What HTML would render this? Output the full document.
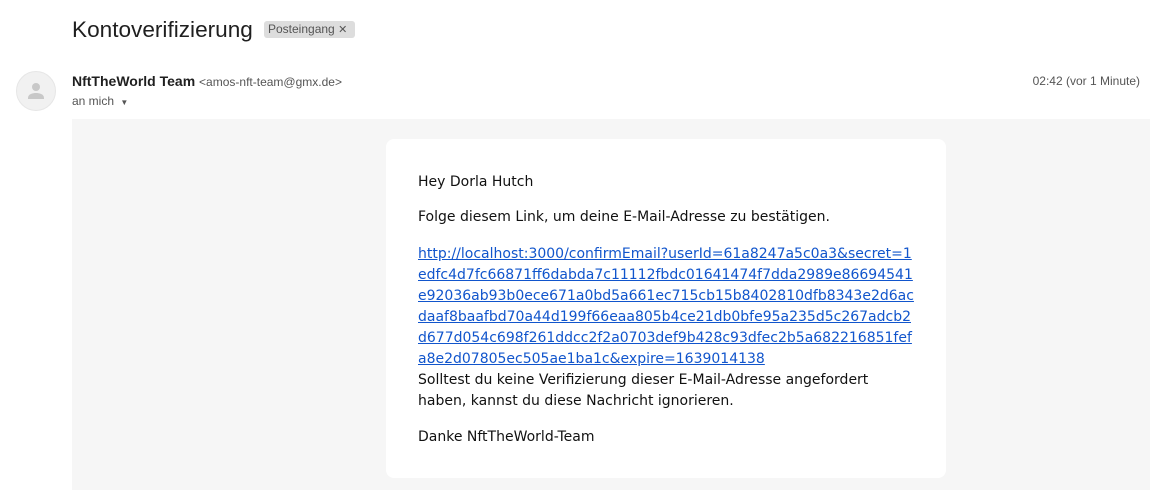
<!DOCTYPE html>
<html><head><meta charset="utf-8"><style>
body{margin:0;width:1150px;height:490px;background:#fff;position:relative;overflow:hidden;font-family:"Liberation Sans",Arial,sans-serif;}
.a{position:absolute;white-space:nowrap;}
.card{position:absolute;left:386px;top:139px;width:560px;height:339px;background:#fff;border-radius:8px;}
.t{position:absolute;left:32px;font-family:"DejaVu Sans",sans-serif;font-size:14px;color:#111;white-space:nowrap;line-height:21px;}
a{color:#1155cc;text-decoration:underline;}
</style></head><body>
<div class="a" style="left:72px;top:17px;font-size:22.6px;color:#1f1f1f;">Kontoverifizierung</div>
<div class="a" style="left:264px;top:21px;height:17px;width:91px;background:#dddddd;border-radius:3px;font-size:12px;color:#555;line-height:17px;padding-left:4px;box-sizing:border-box;">Posteingang <span style="font-size:11px">✕</span></div>
<div class="a" style="left:16px;top:71px;width:40px;height:40px;border-radius:50%;background:#f1f1f1;border:1px solid #e6e6e6;box-sizing:border-box;">
<svg width="40" height="40" viewBox="0 0 40 40" style="position:absolute;left:-1px;top:-1px"><circle cx="20" cy="16" r="4" fill="#c8c8c8"/><path d="M12 27c0-4 5-5 8-5s8 1 8 5v1H12z" fill="#c8c8c8"/></svg></div>
<div class="a" style="left:72px;top:73px;font-size:14px;color:#1f1f1f;"><b>NftTheWorld Team</b> <span style="font-size:12px;color:#555">&lt;amos-nft-team@gmx.de&gt;</span></div>
<div class="a" style="left:72px;top:94px;font-size:12px;color:#555;">an mich <span style="font-size:8px;margin-left:3px">▼</span></div>
<div class="a" style="right:10px;top:74px;font-size:12px;color:#555;">02:42 (vor 1 Minute)</div>
<div class="a" style="left:72px;top:119px;width:1078px;height:371px;background:#f6f6f6;"></div>
<div class="card">
<div class="t" style="top:33px">Hey Dorla Hutch</div>
<div class="t" style="top:68px">Folge diesem Link, um deine E-Mail-Adresse zu bestätigen.</div>
<div class="t" style="top:105px"><a>http://localhost:3000/confirmEmail?userId=61a8247a5c0a3&amp;secret=1</a><br><a>edfc4d7fc66871ff6dabda7c11112fbdc01641474f7dda2989e86694541</a><br><a>e92036ab93b0ece671a0bd5a661ec715cb15b8402810dfb8343e2d6ac</a><br><a>daaf8baafbd70a44d199f66eaa805b4ce21db0bfe95a235d5c267adcb2</a><br><a>d677d054c698f261ddcc2f2a0703def9b428c93dfec2b5a682216851fef</a><br><a>a8e2d07805ec505ae1ba1c&amp;expire=1639014138</a><br>Solltest du keine Verifizierung dieser E-Mail-Adresse angefordert<br>haben, kannst du diese Nachricht ignorieren.</div>
<div class="t" style="top:288px">Danke NftTheWorld-Team</div>
</div>
</body></html>
